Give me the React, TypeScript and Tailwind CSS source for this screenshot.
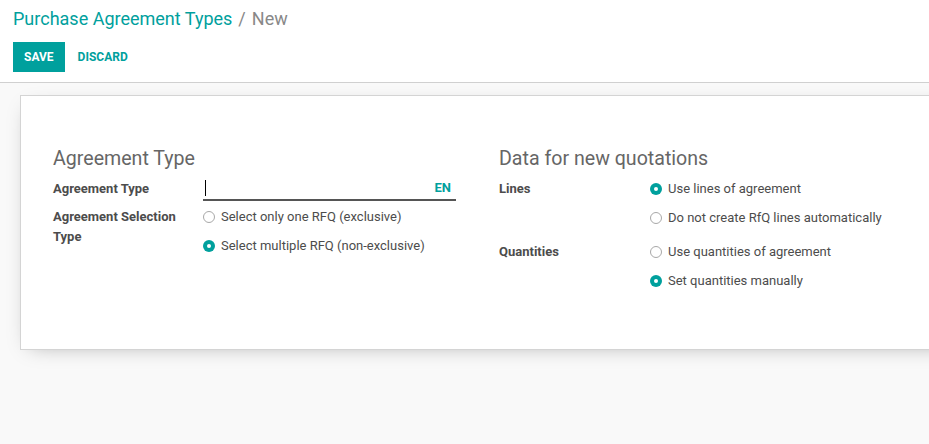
import React from 'react';

const Radio = ({ checked, label }: { checked?: boolean; label: string }) => (
  <div className="flex items-center h-[24px]">
    {checked ? (
      <span className="w-[12px] h-[12px] rounded-full bg-[#00a09d] flex items-center justify-center mr-[6px]">
        <span className="w-[4px] h-[4px] rounded-full bg-white" />
      </span>
    ) : (
      <span className="w-[12px] h-[12px] rounded-full border border-[#a8a8a8] bg-white mr-[6px]" />
    )}
    <span className="text-[13px] text-[#4c4c4c]">{label}</span>
  </div>
);

const App = () => {
  return (
    <div className="w-[929px] h-[444px] overflow-hidden bg-[#f9f9f9] font-['Roboto',sans-serif]">
      <div className="bg-white h-[83px] border-b border-[#d0d0d0] px-[13px] pt-[7px]">
        <div className="text-[18px] leading-[24px] flex items-center">
          <span className="text-[#00a09d]">Purchase Agreement Types</span>
          <span className="text-[#888] mx-[6px]">/</span>
          <span className="text-[#888]">New</span>
        </div>
        <div className="flex items-center mt-[11px]">
          <button className="h-[30px] px-[11px] bg-[#00a09d] text-white text-[12px] font-bold">SAVE</button>
          <button className="h-[30px] px-[13px] text-[#00a09d] text-[12px] font-bold">DISCARD</button>
        </div>
      </div>

      <div className="ml-[20px] mt-[12px] w-[1000px] h-[255px] bg-white border border-[#d4d4d4] shadow-[0_5px_20px_-10px_rgba(0,0,0,0.35)] pl-[32px] pt-[51px]">
        <div className="flex">
          <div className="w-[403px]">
            <div className="text-[19.6px] leading-[24px] text-[#666]">Agreement Type</div>
            <div className="flex mt-[6px] h-[24px]">
              <div className="w-[150px] text-[13px] font-bold text-[#4c4c4c] leading-[24px]">Agreement Type</div>
              <div className="flex-1 border-b-2 border-[#555] flex items-center justify-between">
                <span className="w-px h-[16px] bg-black ml-[2px]" />
                <span className="text-[13px] font-bold text-[#00a09d] mr-[5px]">EN</span>
              </div>
            </div>
            <div className="flex mt-[4px]">
              <div className="w-[150px] text-[13px] font-bold text-[#4c4c4c] leading-[20px] pt-[2px]">
                Agreement Selection<br />Type
              </div>
              <div className="flex flex-col gap-[5px]">
                <Radio label="Select only one RFQ (exclusive)" />
                <Radio checked label="Select multiple RFQ (non-exclusive)" />
              </div>
            </div>
          </div>
          <div className="ml-[43px] w-[420px]">
            <div className="text-[19.6px] leading-[24px] text-[#666]">Data for new quotations</div>
            <div className="flex mt-[6px]">
              <div className="w-[151px] text-[13px] font-bold text-[#4c4c4c] leading-[24px]">Lines</div>
              <div className="flex flex-col gap-[5px]">
                <Radio checked label="Use lines of agreement" />
                <Radio label="Do not create RfQ lines automatically" />
              </div>
            </div>
            <div className="flex mt-[10px]">
              <div className="w-[151px] text-[13px] font-bold text-[#4c4c4c] leading-[24px]">Quantities</div>
              <div className="flex flex-col gap-[5px]">
                <Radio label="Use quantities of agreement" />
                <Radio checked label="Set quantities manually" />
              </div>
            </div>
          </div>
        </div>
      </div>
    </div>
  );
};

export default App;
